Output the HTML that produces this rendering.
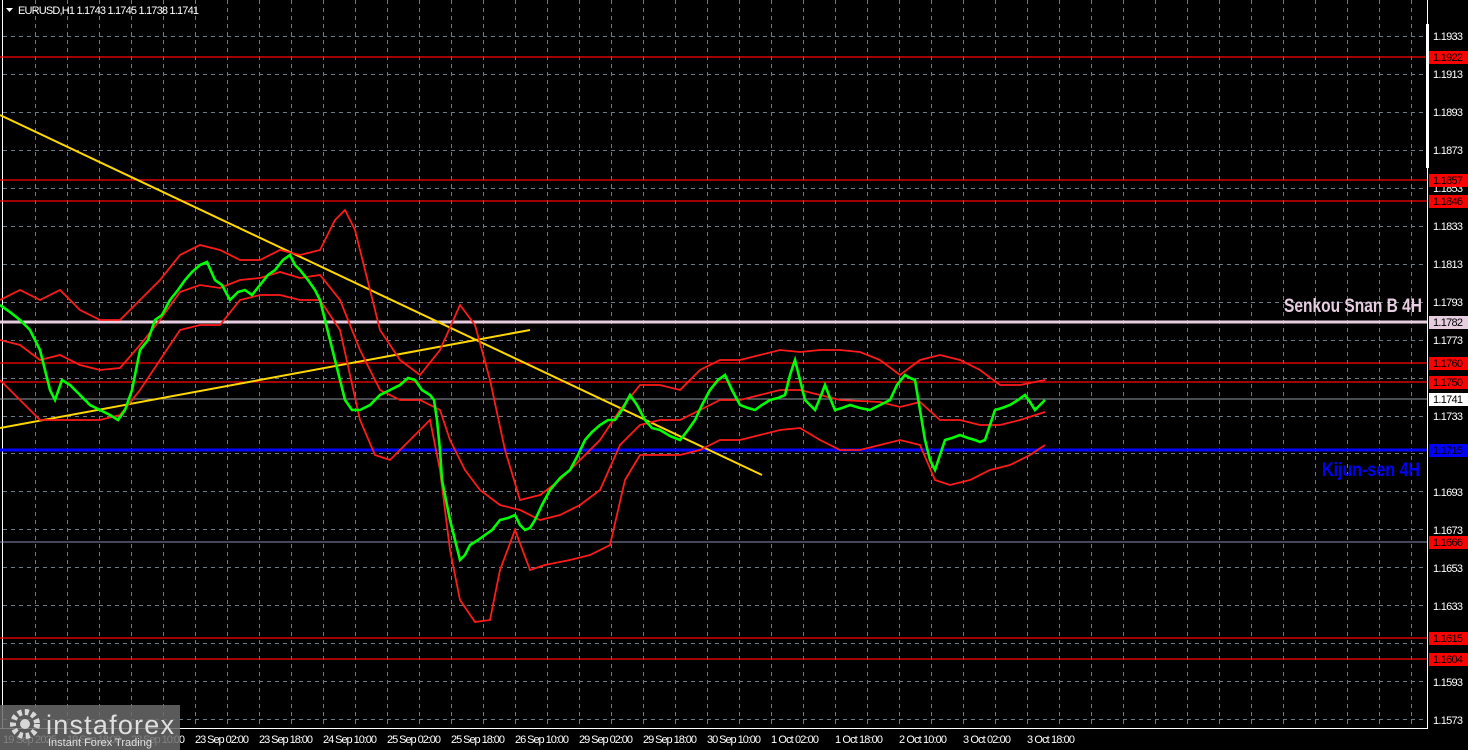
<!DOCTYPE html>
<html><head><meta charset="utf-8"><style>
html,body{margin:0;padding:0;background:#000;width:1468px;height:750px;overflow:hidden}
svg{display:block;font-family:"Liberation Sans",sans-serif}
</style></head><body>
<svg width="1468" height="750" viewBox="0 0 1468 750">
<defs>
<pattern id="gv" x="35" y="0" width="32" height="8" patternUnits="userSpaceOnUse">
<rect x="0" y="0" width="1" height="4" fill="#6b7b88"/>
</pattern>
</defs>
<rect x="0" y="0" width="1468" height="750" fill="#000"/>
<rect x="4" y="0" width="1423" height="728" fill="url(#gv)"/>
<g stroke="#6b7b88" stroke-dasharray="4 4">
<line x1="3" y1="36.5" x2="1427" y2="36.5"/><line x1="3" y1="74.5" x2="1427" y2="74.5"/><line x1="3" y1="112.5" x2="1427" y2="112.5"/><line x1="3" y1="150.5" x2="1427" y2="150.5"/><line x1="3" y1="188.5" x2="1427" y2="188.5"/><line x1="3" y1="226.5" x2="1427" y2="226.5"/><line x1="3" y1="264.5" x2="1427" y2="264.5"/><line x1="3" y1="302.5" x2="1427" y2="302.5"/><line x1="3" y1="340.5" x2="1427" y2="340.5"/><line x1="3" y1="378.5" x2="1427" y2="378.5"/><line x1="3" y1="416.5" x2="1427" y2="416.5"/><line x1="3" y1="453.5" x2="1427" y2="453.5"/><line x1="3" y1="491.5" x2="1427" y2="491.5"/><line x1="3" y1="529.5" x2="1427" y2="529.5"/><line x1="3" y1="567.5" x2="1427" y2="567.5"/><line x1="3" y1="605.5" x2="1427" y2="605.5"/><line x1="3" y1="643.5" x2="1427" y2="643.5"/><line x1="3" y1="681.5" x2="1427" y2="681.5"/><line x1="3" y1="719.5" x2="1427" y2="719.5"/>
</g>
<line x1="2.5" y1="0" x2="2.5" y2="728" stroke="#fff"/>
<g stroke="#ff0000" stroke-width="1.3">
<line x1="0" y1="57" x2="1427" y2="57"/>
<line x1="0" y1="180" x2="1427" y2="180"/>
<line x1="0" y1="201" x2="1427" y2="201"/>
<line x1="0" y1="363" x2="1427" y2="363"/>
<line x1="0" y1="382" x2="1427" y2="382"/>
<line x1="0" y1="638" x2="1427" y2="638"/>
<line x1="0" y1="659" x2="1427" y2="659"/>
</g>
<line x1="0" y1="542" x2="1427" y2="542" stroke="#8a8fb0" stroke-width="1"/>
<line x1="0" y1="399" x2="1427" y2="399" stroke="#8f9aa3" stroke-width="1"/>
<line x1="0" y1="322" x2="1427" y2="322" stroke="#e6cde0" stroke-width="3"/>
<line x1="0" y1="450" x2="1427" y2="450" stroke="#0000ff" stroke-width="3"/>
<line x1="0" y1="115" x2="762" y2="475" stroke="#ffd700" stroke-width="2"/>
<line x1="0" y1="428" x2="530" y2="330" stroke="#ffd700" stroke-width="2"/>
<g fill="none" stroke="#ff1a1a" stroke-width="1.8">
<polyline points="0,300 20,290 40,300 60,290 80,310 100,320 120,320 140,300 160,280 180,255 200,245 220,250 240,260 260,260 280,250 300,255 320,250 335,220 345,210 355,230 370,290 380,330 400,360 420,375 440,350 460,305 475,325 490,380 505,450 520,500 540,495 560,480 580,460 600,440 620,410 640,385 660,385 680,390 700,370 720,360 740,360 760,355 780,350 800,352 820,350 840,350 860,352 880,360 900,375 920,360 940,355 960,360 980,370 1000,385 1020,385 1045,380"/>
<polyline points="0,380 20,400 40,420 60,420 80,420 100,420 120,415 140,390 160,360 180,330 200,325 220,325 240,300 260,295 280,295 300,300 320,300 340,330 360,420 375,455 390,460 410,440 430,420 440,470 450,550 460,600 475,622 490,620 500,570 515,530 530,570 545,565 570,560 590,555 610,545 625,480 640,455 660,455 680,455 700,450 720,440 740,440 760,435 780,430 800,428 820,440 840,450 860,450 880,445 900,440 920,445 935,480 950,485 970,480 990,470 1010,465 1030,455 1045,445"/>
<polyline points="0,340 20,345 40,360 60,355 80,365 100,370 120,368 140,345 160,320 180,292 200,285 220,288 240,280 260,278 280,272 300,278 320,275 340,300 360,350 380,390 400,400 420,400 440,410 450,440 465,470 480,490 500,505 520,510 540,520 560,515 580,505 600,490 620,445 640,425 660,420 680,420 700,410 720,400 740,400 760,395 780,390 800,390 820,395 840,400 860,401 880,402 900,407 920,402 940,420 960,420 980,425 1000,425 1020,420 1045,412"/>
</g>
<polyline fill="none" stroke="#00ff00" stroke-width="2.6" points="0,305 10,312 20,320 30,330 40,350 50,390 55,400 62,380 70,385 80,395 90,405 100,410 110,415 118,420 125,410 132,390 140,350 148,340 155,320 162,315 170,300 178,290 185,280 192,272 200,265 207,262 215,280 222,285 230,300 238,292 245,290 252,295 260,285 268,275 275,270 283,260 290,255 295,265 300,270 308,280 315,290 320,300 325,320 330,340 335,360 340,380 345,400 352,410 360,410 370,405 380,395 390,390 400,385 408,378 415,380 422,390 430,395 434,400 437,420 440,450 442,480 446,500 450,520 455,540 460,560 465,555 470,545 478,540 485,535 492,530 500,520 508,518 515,515 520,525 525,530 530,528 535,520 542,505 550,490 560,478 570,470 578,455 585,440 592,432 600,425 608,420 615,420 622,410 630,395 637,405 645,420 652,428 660,430 670,436 680,440 688,430 695,420 702,405 710,390 718,380 725,375 732,390 740,405 748,408 755,410 762,405 770,400 778,398 785,395 790,375 795,360 800,380 805,400 810,405 815,410 820,398 825,385 830,398 835,410 842,408 850,405 860,408 870,410 880,405 890,400 897,385 905,375 910,378 915,380 920,410 925,440 930,460 935,470 940,455 945,440 952,438 960,435 968,438 975,440 980,442 985,440 990,425 995,410 1002,408 1010,405 1018,400 1025,395 1030,402 1035,410 1040,405 1045,400"/>
<line x1="1427.5" y1="0" x2="1427.5" y2="728" stroke="#fff"/>
<line x1="0" y1="728.5" x2="1428" y2="728.5" stroke="#fff"/>
<rect x="1426" y="24" width="3" height="144" fill="#fff"/>
<g fill="#fff" font-size="11">
<text x="1433" y="40" textLength="30">1.1933</text><text x="1433" y="78" textLength="30">1.1913</text><text x="1433" y="116" textLength="30">1.1893</text><text x="1433" y="154" textLength="30">1.1873</text><text x="1433" y="192" textLength="30">1.1853</text><text x="1433" y="230" textLength="30">1.1833</text><text x="1433" y="268" textLength="30">1.1813</text><text x="1433" y="306" textLength="30">1.1793</text><text x="1433" y="344" textLength="30">1.1773</text><text x="1433" y="420" textLength="30">1.1733</text><text x="1433" y="496" textLength="30">1.1693</text><text x="1433" y="534" textLength="30">1.1673</text><text x="1433" y="572" textLength="30">1.1653</text><text x="1433" y="610" textLength="30">1.1633</text><text x="1433" y="686" textLength="30">1.1593</text><text x="1433" y="724" textLength="30">1.1573</text>
</g>
<g font-size="11">
<rect x="1429" y="51" width="39" height="13" fill="#ff0000"/><text x="1433" y="61" textLength="30">1.1922</text>
<rect x="1429" y="174" width="39" height="13" fill="#ff0000"/><text x="1433" y="184" textLength="30">1.1857</text>
<rect x="1429" y="195" width="39" height="13" fill="#ff0000"/><text x="1433" y="205" textLength="30">1.1846</text>
<rect x="1429" y="316" width="39" height="13" fill="#e6cde0"/><text x="1433" y="326" textLength="30">1.1782</text>
<rect x="1429" y="357" width="39" height="13" fill="#ff0000"/><text x="1433" y="367" textLength="30">1.1760</text>
<rect x="1429" y="376" width="39" height="13" fill="#ff0000"/><text x="1433" y="386" textLength="30">1.1750</text>
<rect x="1429" y="393" width="39" height="13" fill="#fff"/><text x="1433" y="403" textLength="30">1.1741</text>
<rect x="1429" y="444" width="39" height="13" fill="#0000ff"/><text x="1433" y="454" fill="#000" textLength="30">1.1715</text>
<rect x="1429" y="536" width="39" height="13" fill="#ff0000"/><text x="1433" y="546" textLength="30">1.1666</text>
<rect x="1429" y="632" width="39" height="13" fill="#ff0000"/><text x="1433" y="642" textLength="30">1.1615</text>
<rect x="1429" y="653" width="39" height="13" fill="#ff0000"/><text x="1433" y="663" textLength="30">1.1604</text>
</g>
<text x="1284" y="312" font-size="19" font-weight="bold" fill="#e6cde0" textLength="138" lengthAdjust="spacingAndGlyphs">Senkou Snan B 4H</text>
<text x="1322" y="476" font-size="19" font-weight="bold" fill="#0000ff" textLength="98" lengthAdjust="spacingAndGlyphs">Kijun-sen 4H</text>
<g fill="#fff" font-size="11">
<text x="3" y="743" textLength="54">19 Sep 2025</text><text x="67" y="743" textLength="54">19 Sep 18:00</text><text x="131" y="743" textLength="54">22 Sep 10:00</text>
<text x="195" y="743" textLength="54">23 Sep 02:00</text><text x="259" y="743" textLength="54">23 Sep 18:00</text><text x="323" y="743" textLength="54">24 Sep 10:00</text><text x="387" y="743" textLength="54">25 Sep 02:00</text><text x="451" y="743" textLength="54">25 Sep 18:00</text><text x="515" y="743" textLength="54">26 Sep 10:00</text><text x="579" y="743" textLength="54">29 Sep 02:00</text><text x="643" y="743" textLength="54">29 Sep 18:00</text><text x="707" y="743" textLength="54">30 Sep 10:00</text><text x="771" y="743" textLength="48">1 Oct 02:00</text><text x="835" y="743" textLength="48">1 Oct 18:00</text><text x="899" y="743" textLength="48">2 Oct 10:00</text><text x="963" y="743" textLength="48">3 Oct 02:00</text><text x="1027" y="743" textLength="48">3 Oct 18:00</text>
</g>
<path d="M6 8h7l-3.5 4z" fill="#fff"/>
<text x="18" y="14" fill="#fff" font-size="11" textLength="181">EURUSD,H1  1.1743 1.1745 1.1738 1.1741</text>
<rect x="0" y="705" width="180" height="45" fill="#6a6a6a" opacity="0.85"/>
<g fill="#d8d8d8">
<circle cx="25" cy="724" r="12" fill="none" stroke="#d8d8d8" stroke-width="6" stroke-dasharray="4 3"/>
<circle cx="25" cy="724" r="5"/>
</g>
<text x="46" y="734" fill="#e0e0e0" font-size="27" textLength="128">instaforex</text>
<text x="48" y="746" fill="#e0e0e0" font-size="11">Instant Forex Trading</text>
</svg>
</body></html>
